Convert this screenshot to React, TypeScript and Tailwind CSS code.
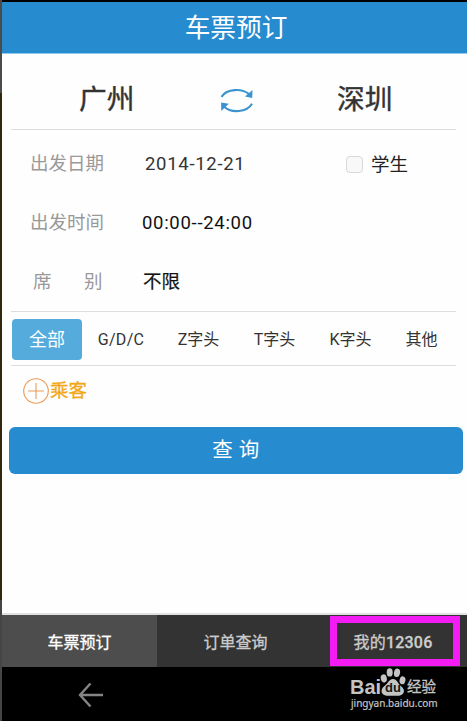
import clsx from "clsx";

const trainTypes = [
  { label: "G/D/C", className: "w-[80px] tracking-[0.3px]" },
  { label: "Z字头", className: "w-[75px]" },
  { label: "T字头", className: "w-[77px]" },
  { label: "K字头", className: "w-[75px]" },
  { label: "其他", className: "w-[67px]" },
];

const SwapIcon = () => (
  <svg width="36" height="26" viewBox="0 0 36 26" fill="none" stroke="#3a93cf" strokeWidth="2.1">
    <path d="M2.5 8.8C8 0.5 23 0 30.5 6.5" />
    <path d="M33 15.8C28 24.5 12 25.5 5 18.5" />
    <path d="M33.5 2L33.2 10L26 8.6Z" fill="#3a93cf" stroke="none" />
    <path d="M2.3 23L2.1 14.5L9.8 15.8Z" fill="#3a93cf" stroke="none" />
  </svg>
);

const PlusIcon = () => (
  <svg width="26" height="26" viewBox="0 0 26 26" fill="none" stroke="#e99a56" strokeWidth="1.1">
    <circle cx="13" cy="13" r="12.3" />
    <path d="M5 13H21M13 5V21" />
  </svg>
);

const BackIcon = () => (
  <svg width="26" height="26" viewBox="0 0 26 26" fill="none" stroke="#858585" strokeWidth="2.4">
    <path d="M12.5 1.5L2 13L12.5 24.5M2 13H25" />
  </svg>
);

const Paw = () => (
  <svg width="26" height="30" viewBox="0 0 26 30" fill="#c4c4c4" className="absolute top-0 left-[31px]">
    <ellipse cx="3.8" cy="10.4" rx="3" ry="4.1" transform="rotate(-12 3.8 10.4)" />
    <ellipse cx="9.7" cy="4.4" rx="3" ry="4.2" />
    <ellipse cx="17" cy="4.8" rx="3" ry="4.2" transform="rotate(12 17 4.8)" />
    <ellipse cx="22.5" cy="12.3" rx="2.9" ry="4" transform="rotate(12 22.5 12.3)" />
    <path d="M13 11C9 11 8.5 15 5 17.5C1.5 20 1 23 2.2 25.3C4 28.8 9.5 27.7 13 27.7C16.5 27.7 21 28.8 23.3 25.3C24.8 22.8 23.8 20.2 20.3 17.5C17.5 15 17 11 13 11Z" />
  </svg>
);

const Watermark = () => (
  <div className="absolute top-[668px] left-[349px] h-[46px] w-[92px] text-[#c4c4c4]">
    <span className="absolute top-[8px] left-[1px] font-['Liberation_Sans'] text-[20px] leading-[22px] font-bold">
      Bai
    </span>
    <Paw />
    <span className="absolute top-[12px] left-[36px] font-['Liberation_Sans'] text-[13px] leading-[15px] font-bold text-[#151515]">
      du
    </span>
    <span className="absolute top-[11px] left-[58px] text-[14.5px] leading-[18px] whitespace-nowrap [-webkit-text-stroke:0.3px]">
      经验
    </span>
    <span className="absolute top-[28px] left-[2px] font-['Noto_Sans'] text-[10px] leading-[14px] whitespace-nowrap [-webkit-text-stroke:0.2px]">
      jingyan.baidu.com
    </span>
  </div>
);

export default function App() {
  return (
    <div className="relative flex h-[721px] w-[467px] overflow-hidden bg-black font-[Roboto,'Noto_Sans_CJK_SC',sans-serif]">
      <div className="flex w-[2px] shrink-0 flex-col">
        <div className="h-[93px] bg-[#4b4b4b]" />
        <div className="h-[507px] bg-[#30270d]" />
        <div className="flex-1 bg-[#454545]" />
      </div>
      <div className="flex min-w-0 flex-1 flex-col pt-[2px]">
        <header className="flex h-[52px] items-center justify-center border-b border-[#8fc9ee] bg-[#268bcf] pt-[2px] pl-[3px] text-[25.7px] text-white">
          车票预订
        </header>

        <main className="flex h-[561px] flex-col border-b-2 border-[#dfe2df] bg-[#fefefe]">
          <div className="mr-[11px] ml-[9px] flex h-[76px] items-center border-b border-[#dddddd] text-[27.7px] text-[#333333] [-webkit-text-stroke:0.4px]">
            <span className="mt-[17px] ml-[68px] w-[140px] leading-none">广州</span>
            <span className="mt-[18px] w-[118px]">
              <SwapIcon />
            </span>
            <span className="mt-[17px] leading-none">深圳</span>
          </div>

          <section className="mr-[11px] ml-[9px] h-[182px] border-b border-[#dddddd] pt-[5px] pl-[19px] text-[18.5px]">
            <div className="flex h-[59px] items-center">
              <span className="w-[115px] text-[#999999]">出发日期</span>
              <span className="w-[201px] tracking-[0.7px] text-[#333333]">2014-12-21</span>
              <span className="mr-[8px] h-[17px] w-[17px] rounded-[4px] border border-[#d8d8d8] bg-[#f8f8f8]" />
              <span className="pt-[2px] text-[#222222]">学生</span>
            </div>
            <div className="flex h-[59px] items-center">
              <span className="w-[112px] text-[#999999]">出发时间</span>
              <span className="tracking-[0.7px] text-[#111111]">00:00--24:00</span>
            </div>
            <div className="flex h-[59px] items-center">
              <span className="ml-[3px] w-[51px] text-[#999999]">席</span>
              <span className="w-[59px] text-[#999999]">别</span>
              <span className="text-[#111111] [-webkit-text-stroke:0.2px]">不限</span>
            </div>
          </section>

          <div className="mr-[11px] ml-[9px] flex h-[54px] shrink-0 items-center border-b border-[#dddddd] text-[16px] text-[#333333]">
            <div className="mt-[1px] ml-[1px] flex h-[41px] w-[70px] shrink-0 items-center justify-center rounded-[4px] bg-[#55abdc] text-[18px] text-white">
              全部
            </div>
            <div className="-ml-[1px] flex pt-[2px]">
              {trainTypes.map((type) => (
                <div key={type.label} className={clsx("flex shrink-0 justify-center", type.className)}>
                  {type.label}
                </div>
              ))}
            </div>
          </div>

          <div className="mt-[12px] ml-[21px] flex h-[26px] items-center gap-[1px] text-[18.5px] text-[#f0a818] [-webkit-text-stroke:0.3px]">
            <PlusIcon />
            <span className="pt-[2px]">乘客</span>
          </div>

          <button className="mt-[23px] mr-[4px] ml-[7px] h-[47px] shrink-0 rounded-[6px] bg-[#268bcf] text-[20.5px] tracking-[0.4px] text-white">
            查 询
          </button>
        </main>

        <nav className="flex h-[52px] items-center bg-[#333333] text-[16px] text-[#cccccc] [-webkit-text-stroke:0.3px]">
          <div className="flex h-full w-[155px] items-center justify-center bg-[#4d4d4d] pt-[3px] text-white">
            车票预订
          </div>
          <div className="flex w-[157px] items-center justify-center pt-[3px]">订单查询</div>
          <div className="flex w-[153px] items-center justify-center pt-[3px] pl-[5px] tracking-[0.2px]">
            我的<span className="font-medium">12306</span>
          </div>
        </nav>

        <div className="flex flex-1 items-center bg-black pt-[2px] pl-[76px]">
          <BackIcon />
        </div>
      </div>

      <div className="absolute top-[616px] left-[330px] h-[50px] w-[130px] border-[7px] border-[#f41cf4]" />
      <Watermark />
    </div>
  );
}
